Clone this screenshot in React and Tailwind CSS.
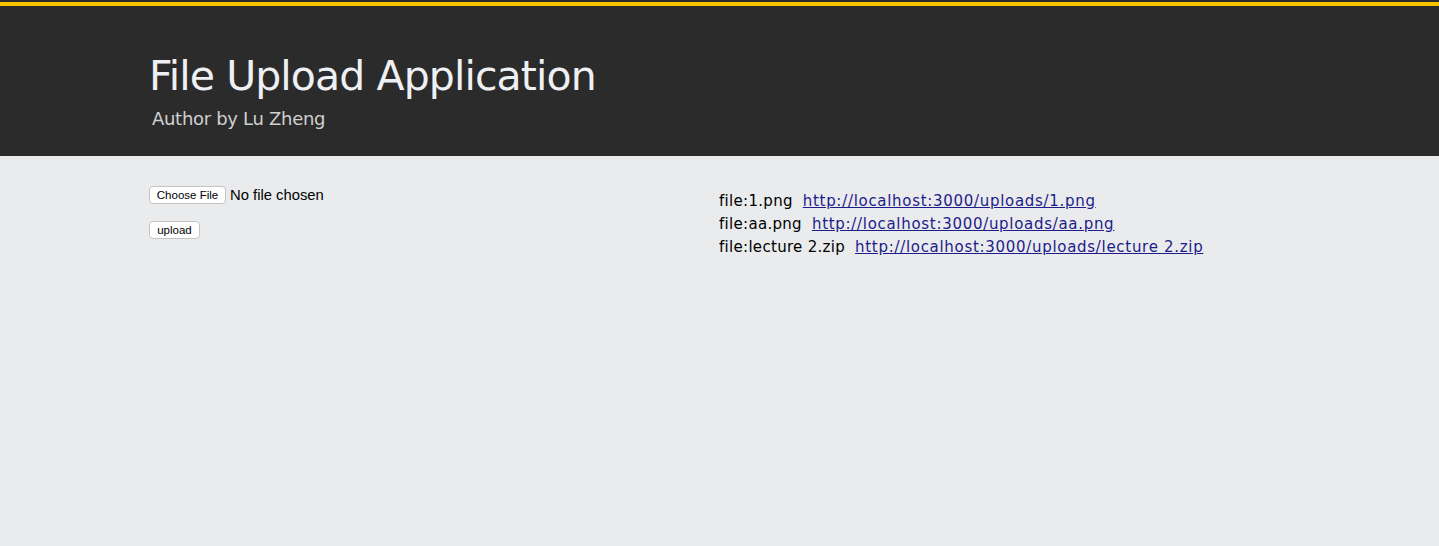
const files = [
  { name: '1.png', url: 'http://localhost:3000/uploads/1.png' },
  { name: 'aa.png', url: 'http://localhost:3000/uploads/aa.png' },
  { name: 'lecture 2.zip', url: 'http://localhost:3000/uploads/lecture 2.zip' },
]

export default function App() {
  return (
    <div className="min-h-[546px] bg-[#eaebed]">
      <header className="bg-[#2b2b2b] pt-[2px]">
        <div className="h-[4px] bg-[#f7c600]" />
        <div className="pl-[149px] pt-[46px] pb-[26px]">
          <h1 className="text-[41px] leading-[48px] text-[#eef0f4] font-['DejaVu_Sans',sans-serif] tracking-[-0.9px]">
            File Upload Application
          </h1>
          <p className="mt-[8px] pl-[3px] text-[18px] leading-[22px] text-[#d0d0d0] font-['DejaVu_Sans',sans-serif] tracking-[-0.3px]">
            Author by Lu Zheng
          </p>
        </div>
      </header>

      <main className="pl-[149px] grid grid-cols-[570px_1fr] pt-[30px]">
        <div className="flex flex-col items-start gap-[17px] font-['Liberation_Sans',sans-serif]">
          <div className="flex items-center gap-[4px]">
            <button className="w-[77px] h-[18px] bg-white border border-[#c4c4c4] rounded-[4px] text-[11.5px] leading-[16px] text-black">
              Choose File
            </button>
            <span className="text-[14.8px] leading-[18px] text-black">No file chosen</span>
          </div>
          <button className="w-[51px] h-[18px] bg-white border border-[#c4c4c4] rounded-[4px] text-[11.5px] leading-[16px] text-black">
            upload
          </button>
        </div>

        <div className="pt-[4px] font-['DejaVu_Sans',sans-serif] text-[15px] leading-[23px] text-black">
          {files.map(f => (
            <div key={f.name}>
              <span className="tracking-[0.3px]">file:{f.name}</span>
              <a href="#" className="ml-[10px] text-[#1c1c8a] underline tracking-[0.7px]">{f.url}</a>
            </div>
          ))}
        </div>
      </main>
    </div>
  )
}
